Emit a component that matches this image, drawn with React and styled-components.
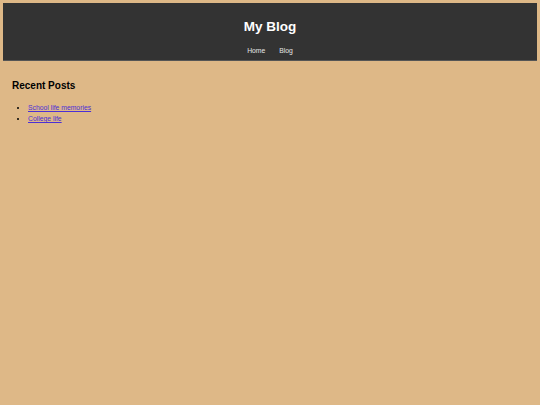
import styled, { createGlobalStyle } from "styled-components";

const GlobalStyle = createGlobalStyle`
  html, body {
    margin: 0;
    padding: 0;
  }
  body {
    background: #deb887;
    font-family: "Liberation Sans", Arial, sans-serif;
    padding: 3px;
    min-height: 405px;
    box-sizing: border-box;
  }
`;

const Header = styled.header`
  background: #333333;
  border-bottom: 1px solid #555;
  padding: 16px 0 5px;
  text-align: center;
`;

const Title = styled.h1`
  margin: 0 0 12px;
  font-size: 13.5px;
  line-height: 16px;
  font-weight: bold;
  color: #ffffff;
`;

const Nav = styled.nav`
  display: flex;
  justify-content: center;
  gap: 14px;
`;

const NavLink = styled.a`
  font-size: 6.8px;
  line-height: 8px;
  color: #e6e6e6;
  text-decoration: none;
`;

const Main = styled.main`
  padding: 19px 9px 0;
`;

const SectionTitle = styled.h2`
  margin: 0 0 10px;
  font-size: 10px;
  line-height: 12px;
  font-weight: bold;
  color: #000;
`;

const PostList = styled.ul`
  margin: 0;
  padding-left: 16px;
  list-style: disc;
  font-size: 6.8px;
  line-height: 11px;
`;

const PostLink = styled.a`
  color: #4b2fd6;
  text-decoration: underline;
`;

const posts = ["School life memories", "College life"];

const App = () => {
  return (
    <>
      <GlobalStyle />
      <Header>
        <Title>My Blog</Title>
        <Nav>
          <NavLink href="#">Home</NavLink>
          <NavLink href="#">Blog</NavLink>
        </Nav>
      </Header>
      <Main>
        <SectionTitle>Recent Posts</SectionTitle>
        <PostList>
          {posts.map((p) => (
            <li key={p}>
              <PostLink href="#">{p}</PostLink>
            </li>
          ))}
        </PostList>
      </Main>
    </>
  );
};

export default App;
